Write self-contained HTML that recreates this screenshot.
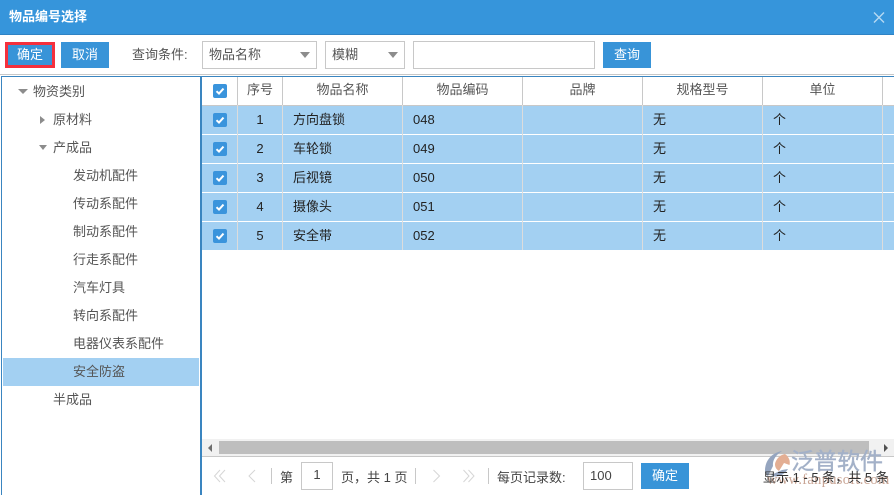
<!DOCTYPE html>
<html lang="zh">
<head>
<meta charset="utf-8">
<title>物品编号选择</title>
<style>
html,body{margin:0;padding:0;background:#fff}
body{width:894px;height:495px;position:relative;overflow:hidden;font-family:"Liberation Sans","Noto Sans CJK SC",sans-serif;font-size:13px;color:#555}
.a{position:absolute;white-space:nowrap}
.btn{position:absolute;background:#3894d8;color:#fff;text-align:center;height:26px;line-height:25px;font-size:13px}
.box{position:absolute;border:1px solid #c8c8c8;box-sizing:border-box;background:#fff;height:28px;line-height:26px;padding-left:6px;color:#555}
.tri{position:absolute;width:0;height:0;border-left:5px solid transparent;border-right:5px solid transparent;border-top:6px solid #8c8c8c}
.t{position:absolute;left:73px;height:28px;line-height:28px;white-space:nowrap;color:#555}
.h{position:absolute;top:77px;height:28px;line-height:26px;text-align:center;color:#555}
.v{position:absolute;top:77px;width:1px;height:173px;background:#dcdcdc}
.vh{position:absolute;top:77px;width:1px;height:28px;background:#c8c8c8}
.row{position:absolute;left:202px;width:692px;height:28px;background:#a3d0f2}
.c{position:absolute;line-height:28px;height:28px;color:#222;white-space:nowrap;top:0}
.cb{position:absolute;left:213px;width:14px;height:14px;background:#3a94dc;border-radius:2px}
.cb svg{display:block}
.sep{position:absolute;top:468px;width:1px;height:16px;background:#c8c8c8}
</style>
</head>
<body>
<!-- title bar -->
<div class="a" style="left:0;top:0;width:894px;height:34px;background:#3695db"></div>
<div class="a" style="left:0;top:34px;width:894px;height:1px;background:#2f83c4"></div>
<div class="a" style="left:9px;top:7px;line-height:20px;font-size:13px;font-weight:bold;color:#fff">物品编号选择</div>
<svg class="a" style="left:873px;top:11px" width="13" height="13" viewBox="0 0 13 13"><path d="M1 1.5L11 11.5M11 1.5L1 11.5" stroke="#b6d9f2" stroke-width="1.4" fill="none"/></svg>

<!-- toolbar -->
<div class="btn" style="left:5px;top:42px;width:50px;height:26px;box-sizing:border-box;border:3px solid #f5303c;background:#3894d8;line-height:20px">确定</div>
<div class="btn" style="left:61px;top:42px;width:48px;">取消</div>
<div class="a" style="left:132px;top:45px;line-height:20px;color:#555">查询条件:</div>
<div class="box" style="left:202px;top:41px;width:115px">物品名称</div>
<div class="tri" style="left:300px;top:52px"></div>
<div class="box" style="left:325px;top:41px;width:80px">模糊</div>
<div class="tri" style="left:388px;top:52px"></div>
<div class="box" style="left:413px;top:41px;width:182px"></div>
<div class="btn" style="left:603px;top:42px;width:48px">查询</div>
<div class="a" style="left:0;top:74px;width:894px;height:1px;background:#c8c8c8"></div>
<div class="a" style="left:1px;top:76px;width:893px;height:1px;background:#3a85c0"></div>

<!-- left tree -->
<div class="a" style="left:1px;top:76px;width:1px;height:419px;background:#3a85c0"></div>
<div class="a" style="left:200px;top:76px;width:2px;height:419px;background:#3a85c0"></div>
<div class="a" style="left:3px;top:358px;width:196px;height:28px;background:#a3d0f2"></div>
<div class="tri" style="left:18px;top:89px;border-left-width:5px;border-right-width:5px;border-top-width:5px"></div>
<div class="t" style="left:33px;top:78px">物资类别</div>
<div class="a" style="left:40px;top:116px;width:0;height:0;border-top:4px solid transparent;border-bottom:4px solid transparent;border-left:5px solid #8c8c8c"></div>
<div class="t" style="left:53px;top:106px">原材料</div>
<div class="tri" style="left:39px;top:145px;border-left-width:4.5px;border-right-width:4.5px;border-top-width:5px"></div>
<div class="t" style="left:53px;top:134px">产成品</div>
<div class="t" style="top:162px">发动机配件</div>
<div class="t" style="top:190px">传动系配件</div>
<div class="t" style="top:218px">制动系配件</div>
<div class="t" style="top:246px">行走系配件</div>
<div class="t" style="top:274px">汽车灯具</div>
<div class="t" style="top:302px">转向系配件</div>
<div class="t" style="top:330px">电器仪表系配件</div>
<div class="t" style="top:358px">安全防盗</div>
<div class="t" style="left:53px;top:386px">半成品</div>

<!-- table header -->
<div class="h" style="left:238px;width:44px">序号</div>
<div class="h" style="left:283px;width:119px">物品名称</div>
<div class="h" style="left:403px;width:119px">物品编码</div>
<div class="h" style="left:523px;width:119px">品牌</div>
<div class="h" style="left:643px;width:119px">规格型号</div>
<div class="h" style="left:763px;width:119px">单位</div>
<div class="a" style="left:202px;top:105px;width:692px;height:1px;background:#c8c8c8"></div>

<!-- rows -->
<div class="row" style="top:106px"><div class="c" style="left:36px;width:44px;text-align:center">1</div><div class="c" style="left:91px">方向盘锁</div><div class="c" style="left:211px">048</div><div class="c" style="left:451px">无</div><div class="c" style="left:571px">个</div></div>
<div class="row" style="top:135px"><div class="c" style="left:36px;width:44px;text-align:center">2</div><div class="c" style="left:91px">车轮锁</div><div class="c" style="left:211px">049</div><div class="c" style="left:451px">无</div><div class="c" style="left:571px">个</div></div>
<div class="row" style="top:164px"><div class="c" style="left:36px;width:44px;text-align:center">3</div><div class="c" style="left:91px">后视镜</div><div class="c" style="left:211px">050</div><div class="c" style="left:451px">无</div><div class="c" style="left:571px">个</div></div>
<div class="row" style="top:193px"><div class="c" style="left:36px;width:44px;text-align:center">4</div><div class="c" style="left:91px">摄像头</div><div class="c" style="left:211px">051</div><div class="c" style="left:451px">无</div><div class="c" style="left:571px">个</div></div>
<div class="row" style="top:222px"><div class="c" style="left:36px;width:44px;text-align:center">5</div><div class="c" style="left:91px">安全带</div><div class="c" style="left:211px">052</div><div class="c" style="left:451px">无</div><div class="c" style="left:571px">个</div></div>

<!-- grid lines -->
<div class="v" style="left:237px"></div><div class="v" style="left:282px"></div><div class="v" style="left:402px"></div><div class="v" style="left:522px"></div><div class="v" style="left:642px"></div><div class="v" style="left:762px"></div><div class="v" style="left:882px"></div>
<div class="vh" style="left:237px"></div><div class="vh" style="left:282px"></div><div class="vh" style="left:402px"></div><div class="vh" style="left:522px"></div><div class="vh" style="left:642px"></div><div class="vh" style="left:762px"></div><div class="vh" style="left:882px"></div>

<!-- checkboxes -->
<div class="cb" style="top:84px"><svg width="14" height="14"><path d="M3.5 7.2L6 9.6L10.5 4.6" stroke="#fff" stroke-width="2" fill="none"/></svg></div>
<div class="cb" style="top:113px"><svg width="14" height="14"><path d="M3.5 7.2L6 9.6L10.5 4.6" stroke="#fff" stroke-width="2" fill="none"/></svg></div>
<div class="cb" style="top:142px"><svg width="14" height="14"><path d="M3.5 7.2L6 9.6L10.5 4.6" stroke="#fff" stroke-width="2" fill="none"/></svg></div>
<div class="cb" style="top:171px"><svg width="14" height="14"><path d="M3.5 7.2L6 9.6L10.5 4.6" stroke="#fff" stroke-width="2" fill="none"/></svg></div>
<div class="cb" style="top:200px"><svg width="14" height="14"><path d="M3.5 7.2L6 9.6L10.5 4.6" stroke="#fff" stroke-width="2" fill="none"/></svg></div>
<div class="cb" style="top:229px"><svg width="14" height="14"><path d="M3.5 7.2L6 9.6L10.5 4.6" stroke="#fff" stroke-width="2" fill="none"/></svg></div>

<!-- scrollbar -->
<div class="a" style="left:202px;top:439px;width:692px;height:17px;background:#f1f1f1"></div>
<div class="a" style="left:219px;top:441px;width:650px;height:13px;background:#bebebe"></div>
<div class="a" style="left:208px;top:444px;width:0;height:0;border-top:4px solid transparent;border-bottom:4px solid transparent;border-right:4px solid #6e6e6e"></div>
<div class="a" style="left:884px;top:444px;width:0;height:0;border-top:4px solid transparent;border-bottom:4px solid transparent;border-left:4px solid #505050"></div>
<div class="a" style="left:202px;top:456px;width:692px;height:1px;background:#c8c8c8"></div>

<!-- pager -->
<svg class="a" style="left:212px;top:468px" width="50" height="16" viewBox="0 0 50 16" fill="none" stroke="#d6d6d6" stroke-width="1"><path d="M8 2L2.5 8L8 14M13 2L7.5 8L13 14M43 2L37 8L43 14"/></svg>
<div class="sep" style="left:271px"></div>
<div class="a" style="left:280px;top:468px;line-height:20px;color:#444">第</div>
<div class="box" style="left:301px;top:462px;width:32px;height:28px;padding:0;text-align:center;line-height:24px;color:#444">1</div>
<div class="a" style="left:341px;top:468px;line-height:20px;color:#444">页，共 1 页</div>
<div class="sep" style="left:415px"></div>
<svg class="a" style="left:430px;top:468px" width="50" height="16" viewBox="0 0 50 16" fill="none" stroke="#d6d6d6" stroke-width="1"><path d="M3.5 2L9.5 8L3.5 14M33.5 2L39 8L33.5 14M38.5 2L44 8L38.5 14"/></svg>
<div class="sep" style="left:488px"></div>
<div class="a" style="left:497px;top:468px;line-height:20px;color:#444">每页记录数:</div>
<div class="box" style="left:583px;top:462px;width:50px;height:28px;padding-left:6px;line-height:26px;color:#444">100</div>
<div class="btn" style="left:641px;top:463px;width:48px">确定</div>

<!-- watermark logo -->
<svg class="a" style="left:763px;top:449px" width="30" height="30" viewBox="0 0 30 30"><path d="M2 22C2 11 9 4 19 2L15 5C11 9 9.5 13 10 17L5 27C3 26 2 24 2 22Z" fill="#95a5bf"/><path d="M12 15C13 10 17 6 22 5C26 8 27.5 12 26.5 16L21 14L16 22C13 20 12 18 12 15Z" fill="#e3ae93"/><path d="M8 26L19 21L25 20C22 25 14 30 8 26Z" fill="#95a5bf"/></svg>
<div class="a" style="left:791px;top:445px;font-size:23px;line-height:32px;letter-spacing:0;color:#a3b1c8;font-weight:normal;-webkit-text-stroke:.4px #a3b1c8">泛普软件</div>
<div class="a" style="left:767px;top:472px;font-family:'Liberation Serif',serif;font-size:14.5px;line-height:16px;color:#c9a595;letter-spacing:.3px">www.fanpusoft.com</div>
<div class="a" style="left:763px;top:468px;line-height:20px;color:#333;font-size:13px">显示 1 - 5 条，共 5 条</div>
</body>
</html>
